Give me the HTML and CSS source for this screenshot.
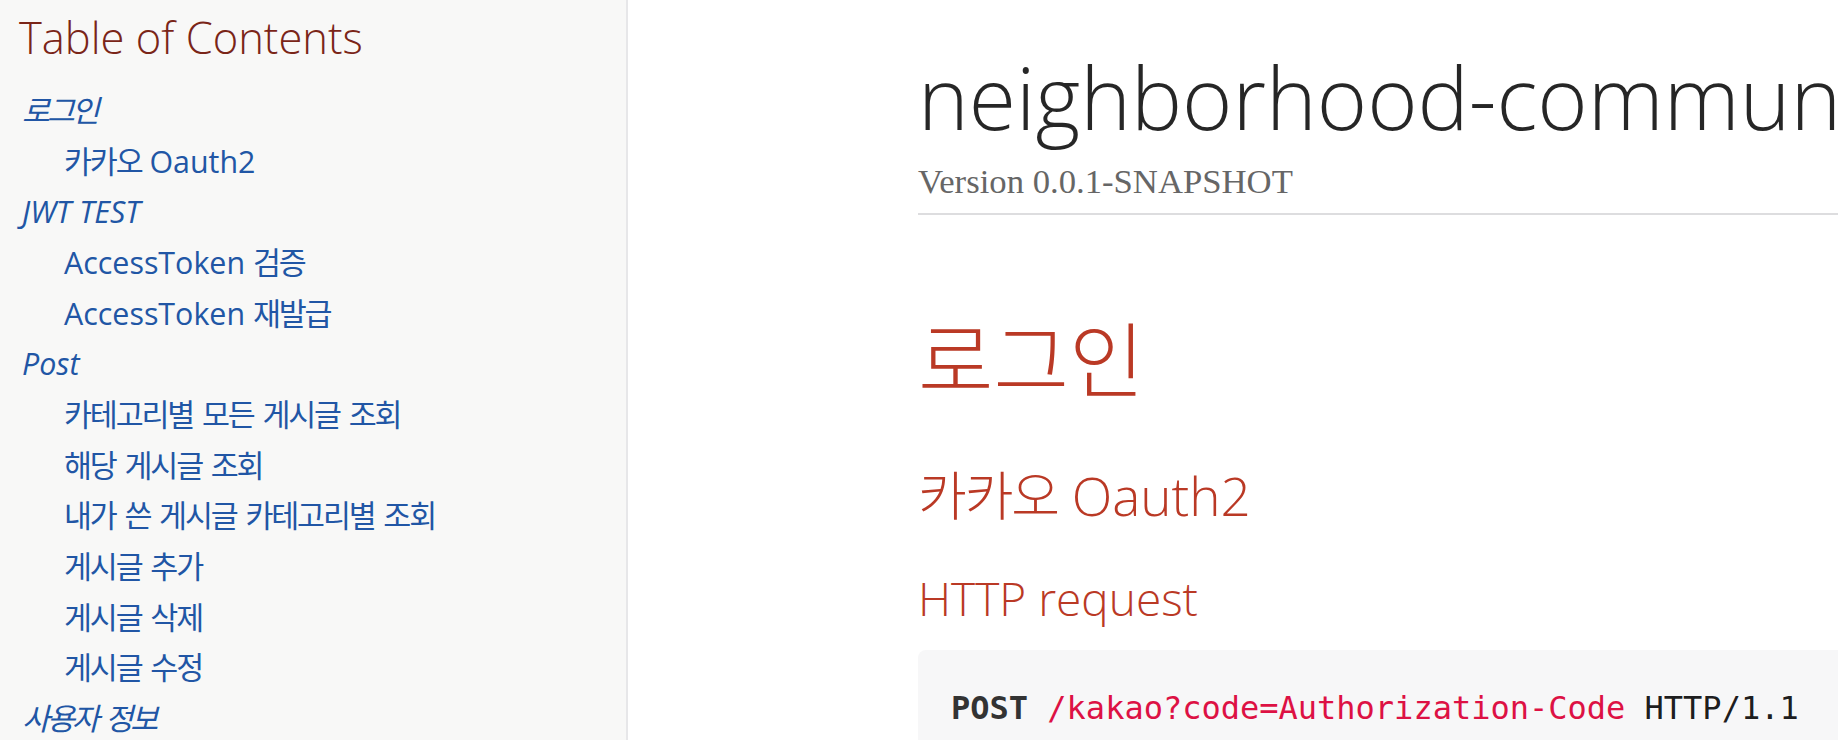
FILE: index.html
```html
<!DOCTYPE html>
<html lang="ko">
<head>
<meta charset="utf-8">
<title>neighborhood-community API</title>
<link rel="stylesheet" href="styles.css">
</head>
<body>
<div class="page">
  <aside class="toc">
    <div class="toctitle">Table of Contents</div>
    <ul class="sectlevel1">
      <li><a href="#login"><em><span class="ko">로그인</span></em></a>
        <ul class="sectlevel2">
          <li><a href="#kakao"><span class="ko">카카오</span> Oauth2</a></li>
        </ul>
      </li>
      <li><a href="#jwt"><em>JWT TEST</em></a>
        <ul class="sectlevel2">
          <li><a href="#at-verify">AccessToken <span class="ko">검증</span></a></li>
          <li><a href="#at-reissue">AccessToken <span class="ko">재발급</span></a></li>
        </ul>
      </li>
      <li><a href="#post"><em>Post</em></a>
        <ul class="sectlevel2">
          <li><a href="#post-all"><span class="ko">카테고리별 모든 게시글 조회</span></a></li>
          <li><a href="#post-one"><span class="ko">해당 게시글 조회</span></a></li>
          <li><a href="#post-mine"><span class="ko">내가 쓴 게시글 카테고리별 조회</span></a></li>
          <li><a href="#post-add"><span class="ko">게시글 추가</span></a></li>
          <li><a href="#post-del"><span class="ko">게시글 삭제</span></a></li>
          <li><a href="#post-edit"><span class="ko">게시글 수정</span></a></li>
        </ul>
      </li>
      <li><a href="#user"><em><span class="ko">사용자 정보</span></em></a></li>
    </ul>
  </aside>
  <main class="main">
    <header class="header">
      <h1 class="doc-title">neighborhood-community API</h1>
      <div class="details"><span class="revnumber">Version 0.0.1-SNAPSHOT</span></div>
    </header>
    <section class="content">
      <h2 id="login" class="sect1">로그인</h2>
      <h3 id="kakao" class="sect2"><span class="ko">카카오</span> Oauth2</h3>
      <h4 class="sect3">HTTP request</h4>
      <div class="listing"><pre class="code"><span class="kw">POST</span> <span class="str">/kakao?code=Authorization-Code</span> HTTP/1.1</pre></div>
    </section>
  </main>
</div>
</body>
</html>
```
FILE: styles.css
```css
html, body {
  margin: 0;
  padding: 0;
  background: #fff;
}

body {
  width: 1838px;
  height: 740px;
  overflow: hidden;
  font-family: "Open Sans", "Noto Sans CJK KR", "DejaVu Sans", sans-serif;
  color: rgba(0, 0, 0, 0.8);
}

.page {
  display: flex;
  align-items: flex-start;
  height: 740px;
  overflow: hidden;
}

/* ---------- Table of contents ---------- */
.toc {
  flex: 0 0 auto;
  box-sizing: border-box;
  width: 628px;
  height: 740px;
  padding: 12px 0 0 19px;
  background: #f8f8f7;
  border-right: 2px solid #e7e7e9;
  overflow: hidden;
}

.toctitle {
  font-family: "Open Sans", "Noto Sans CJK KR", sans-serif;
  font-weight: 300;
  font-size: 43.5px;
  line-height: 52px;
  color: #7a2518;
  margin: 0 0 27px 0;
  white-space: nowrap;
}

.toc ul {
  list-style: none;
  margin: 0;
  padding: 0;
}

.sectlevel1 {
  font-size: 30.4px;
  padding-left: 3px !important;
}

.toc li {
  line-height: 1.3334;
  margin-top: 0.3334em;
  white-space: nowrap;
}

.sectlevel2 {
  margin-left: 42px !important;
}

.toc a {
  color: #2156a5;
  text-decoration: none;
}

.toc em {
  font-style: italic;
}

.toc .ko {
  letter-spacing: -0.07em;
  word-spacing: 0.1em;
}

.toc em .ko {
  letter-spacing: -0.1em;
  word-spacing: 0.12em;
}

/* ---------- Main column ---------- */
.main {
  flex: 0 0 auto;
  width: 1400px;
  padding: 45px 0 0 290px;
}

.header {
  border-bottom: 2px solid #dddddf;
  padding-bottom: 11px;
}

.doc-title {
  margin: 0;
  font-family: "Open Sans", "Noto Sans CJK KR", sans-serif;
  font-weight: 300;
  font-size: 86px;
  line-height: 104px;
  color: rgba(0, 0, 0, 0.85);
  white-space: nowrap;
}

.details {
  margin-top: 13px;
  font-family: "Liberation Serif", "DejaVu Serif", serif;
  font-size: 34.7px;
  line-height: 40px;
  color: #666;
}

.content h2,
.content h3,
.content h4 {
  font-family: "Open Sans", "Noto Sans CJK KR Light", "Noto Sans CJK KR", sans-serif;
  font-weight: 300;
  color: #ba3925;
  margin: 0;
  white-space: nowrap;
}

.sect1 {
  font-size: 82px;
  line-height: 98px;
  margin-top: 95px !important;
}

.sect2 {
  font-size: 53px;
  line-height: 64px;
  margin-top: 56px !important;
}

.sect2 .ko {
  letter-spacing: -0.04em;
}

.sect3 {
  font-size: 46px;
  line-height: 55px;
  margin-top: 43px !important;
}

.listing {
  margin-top: 24px;
}

.code {
  margin: 0;
  padding: 35px 33px 32px 33px;
  background: #f7f7f8;
  border-radius: 8px;
  font-family: "DejaVu Sans Mono", "Liberation Mono", monospace;
  font-size: 32px;
  line-height: 1.45;
  color: rgba(0, 0, 0, 0.9);
}

.code .kw {
  font-weight: bold;
  color: #333;
}

.code .str {
  color: #dd1144;
}
```
